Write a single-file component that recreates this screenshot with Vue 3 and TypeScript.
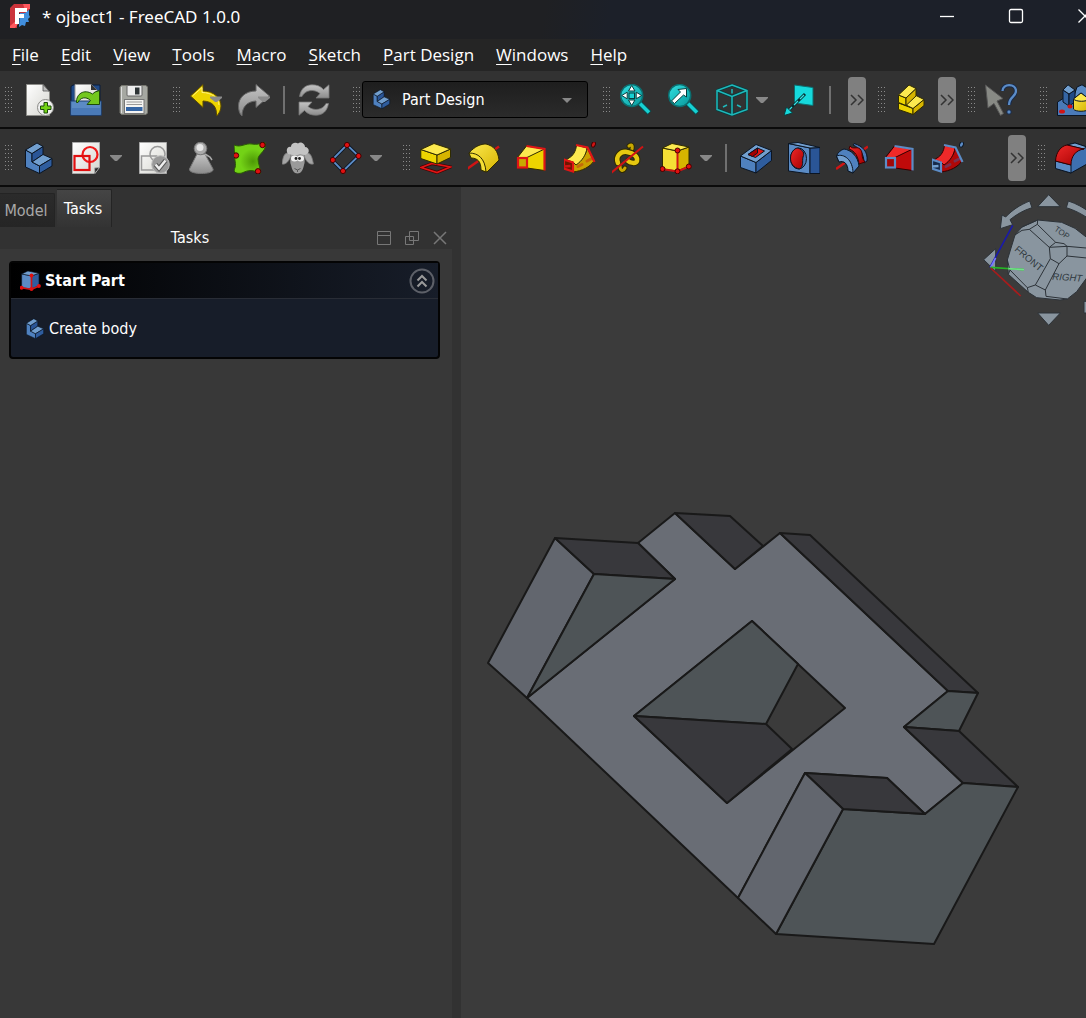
<script setup lang="ts">
import { ref } from 'vue'

type ToolItem = { kind: 'tool' | 'drop' | 'sep' | 'more'; icon?: string; label?: string }

const tool = (icon: string, label: string): ToolItem => ({ kind: 'tool', icon, label })
const drop = (label: string): ToolItem => ({ kind: 'drop', label })
const sep: ToolItem = { kind: 'sep' }
const more: ToolItem = { kind: 'more', label: 'More tools' }

const menus = ['File', 'Edit', 'View', 'Tools', 'Macro', 'Sketch', 'Part Design', 'Windows', 'Help']

const workbench = ref('Part Design')

const fileTools: ToolItem[][] = [
  [tool('new', 'New document'), tool('open', 'Open'), tool('save', 'Save')],
  [tool('undo', 'Undo'), tool('redo', 'Redo'), sep, tool('refresh', 'Refresh')],
]

const viewTools: ToolItem[][] = [
  [tool('fit', 'Fit all'), tool('fitsel', 'Fit selection'), tool('iso', 'Isometric view'), drop('Standard views'), tool('measure', 'Align to face'), sep, more],
  [tool('part', 'Create part'), more],
  [tool('help', "What's this?")],
  [tool('assembly', 'Assembly')],
]

const designTools: ToolItem[][] = [
  [tool('body', 'Create body'), tool('sketch', 'Create sketch'), drop('Sketch tools'), tool('validate', 'Validate sketch'), tool('pawn', 'Check geometry'), tool('binder', 'Shape binder'), tool('sheep', 'Clone'), tool('datum', 'Datum'), drop('Datum tools')],
  [tool('pad', 'Pad'), tool('revolve', 'Revolution'), tool('loft', 'Additive loft'), tool('pipe', 'Additive pipe'), tool('helix', 'Additive helix'), tool('prim', 'Additive primitive'), drop('Additive primitives'), sep, tool('pocket', 'Pocket'), tool('hole', 'Hole'), tool('groove', 'Groove'), tool('subloft', 'Subtractive loft'), tool('subpipe', 'Subtractive pipe'), more],
  [tool('fillet', 'Fillet')],
]

const activeTab = ref('Tasks')
const taskOpen = ref(true)

type Face = { tone: string; points: string }
const faces: Face[] = [
  { tone: 'side', points: '555,538 594,574 527,698 488,663' },
  { tone: 'dark', points: '555,538 638,543 675,579 594,574' },
  { tone: 'green', points: '594,574 675,579 527,698' },
  { tone: 'dark', points: '675,513 730,516 763,546 735,569' },
  { tone: 'dark', points: '780,533 810,535 978,693 948,691' },
  { tone: 'green', points: '948,691 978,693 959,731 904,727' },
  { tone: 'dark', points: '904,727 959,731 1018,787 963,783' },
  { tone: 'green', points: '963,783 1018,787 934,944 776,934 843,809 925,814' },
  { tone: 'dark', points: '805,773 887,778 925,814 843,809' },
  { tone: 'side', points: '805,773 843,809 776,934 738,898' },
  { tone: 'green', points: '752,621 798,664 766,724 634,716' },
  { tone: 'dark', points: '634,716 766,724 792,749 727,803' },
]
const bars = [
  { name: 'main', start: fileTools, combo: true, rest: viewTools },
  { name: 'design', start: designTools, combo: false, rest: [] as ToolItem[][] },
]
</script>

<template>
  <div class="app">
    <svg class="defs" aria-hidden="true">
      <defs>
        <linearGradient id="gPage" x1="0" y1="0" x2="1" y2="1"><stop offset="0" stop-color="#fff" /><stop offset="1" stop-color="#d5d5cf" /></linearGradient>
        <linearGradient id="gGrey" x1="0" y1="0" x2="0" y2="1"><stop offset="0" stop-color="#c4c4c4" /><stop offset="1" stop-color="#8c8c8c" /></linearGradient>
        <linearGradient id="gYel" x1="0" y1="0" x2="1" y2="1"><stop offset="0" stop-color="#fce94f" /><stop offset="1" stop-color="#d6b400" /></linearGradient>
        <linearGradient id="gBlue" x1="0" y1="0" x2="1" y2="1"><stop offset="0" stop-color="#729fcf" /><stop offset="1" stop-color="#3465a4" /></linearGradient>
        <linearGradient id="gRed" x1="0" y1="0" x2="1" y2="1"><stop offset="0" stop-color="#ef2929" /><stop offset="1" stop-color="#a40000" /></linearGradient>
        <radialGradient id="gGreen" cx="0.6" cy="0.6" r="0.4"><stop offset="0" stop-color="#4e9a06" /><stop offset="1" stop-color="#73d216" /></radialGradient>
        <linearGradient id="gTeal" x1="0" y1="0" x2="1" y2="1"><stop offset="0" stop-color="#34e0e2" /><stop offset="1" stop-color="#06989a" /></linearGradient>
      </defs>
      <symbol id="new" viewBox="0 0 32 32">
        <path d="M4.500 .5H21L27.500 8V31.500H4.500Z" fill="url(#gPage)" stroke="#8c8c88" />
        <path d="M21 .5V7H27Z" fill="#bbb" stroke="#555" stroke-width=".8" />
        <circle cx="23.500" cy="23.500" r="8" fill="#eee" stroke="#8a8a86" />
        <path d="M22 18.500h3.500v3.500H29v3.500h-3.500V29H22v-3.500h-3.500V22H22Z" fill="#73d216" stroke="#1c4a0b" />
      </symbol>
      <symbol id="open" viewBox="0 0 32 32">
        <path d="M1 31V2.500L3 1H30V31Z" fill="#204a87" stroke="#0b1d3a" />
        <path d="M5 20V.5H21.500L27 6V20Z" fill="url(#gPage)" stroke="#999" />
        <path d="M21 0V6H27Z" fill="#333" />
        <path d="M.7 17H31.300V31.300H.7Z" fill="#5b8bc4" stroke="#1d3d6c" />
        <path d="M1.500 24H30.500V30.500H1.500Z" fill="#4a7ab8" />
        <path d="M6.500 18.500C6 10 14 4.500 22.500 10L25 8 29.500 6.500V20.500H17L20.500 16.500C16 12 10 13.500 8 18.500Z" fill="#73c81e" stroke="#1c4a0b" />
      </symbol>
      <symbol id="save" viewBox="0 0 32 32">
        <path d="M3.500 1.500H28L29.500 3V29L28 30.500H3.500L2 29V3Z" fill="#a6a8a2" stroke="#77776f" />
        <path d="M3.500 3V29" stroke="#ddd" />
        <rect x="9" y="1.500" width="15" height="10.500" rx="1" fill="#eee" stroke="#666" />
        <rect x="17" y="3.500" width="4.500" height="7" fill="#2e3436" />
        <rect x="6.500" y="15.500" width="19.500" height="14" fill="#f4f4f2" stroke="#777" />
        <path d="M8.500 18H24M8.500 20.500H24" stroke="#999" />
        <rect x="8" y="23" width="16.500" height="4" fill="#3465a4" />
      </symbol>
      <symbol id="undo" viewBox="0 0 32 32">
        <path d="M.5 12L13 .5V7C24 7 31 14 31 22C31 26 29 30 26.500 32C27 23 23 17.500 13 17V23.500Z" fill="#edd400" stroke="#5b4a00" />
        <path d="M2.500 12L12 3.500V8.500C22 8.500 28.500 14 29 21" fill="none" stroke="#fff07a" />
        <path d="M20 12.500H32V14L27 18H25L20 14Z" fill="#8b8b8b" />
      </symbol>
      <symbol id="redo" viewBox="0 0 32 32">
        <path d="M31.500 12L18 .5V7C7 7 .5 14 .5 22C.5 26 1.500 30 4 32C4 23 9 17.500 18 17V23.500Z" fill="url(#gGrey)" stroke="#666" />
        <path d="M20 12.500H32V14L27 18H25L20 14Z" fill="#8b8b8b" />
      </symbol>
      <symbol id="refresh" viewBox="0 0 32 32">
        <path d="M1.500 12.500C3 4 8 .8 14 .8C18.500 .8 22.500 2 25.500 5.500L31 .8V14H18L22 9.500C16 4.500 7 6 4 12.500Z" fill="url(#gGrey)" stroke="#777" stroke-width=".8" />
        <path d="M30.500 19.500C29 28 24 31.200 18 31.200C13.500 31.200 9.500 30 6.500 26.500L1 31.200V18H14L10 22.500C16 27.500 25 26 28 19.500Z" fill="url(#gGrey)" stroke="#777" stroke-width=".8" />
      </symbol>
      <symbol id="fit" viewBox="0 0 32 32">
        <path d="M19.500 19L29.500 29" stroke="#0b4a4c" stroke-width="5.500" /><path d="M20 19.500L29 28.500" stroke="#16d0d2" stroke-width="3.500" />
        <circle cx="11.700" cy="11.500" r="11" fill="url(#gTeal)" stroke="#0b6e70" stroke-width="1.500" />
        <path d="M11.700 1.500L15 7H8.500ZM11.700 21.500L15 16H8.500ZM1.700 11.500L7.200 8.200V14.800ZM21.700 11.500L16.200 8.200V14.800Z" fill="#fff" stroke="#093d3e" />
        <rect x="9" y="9" width="5.500" height="5.500" fill="#16d0d2" stroke="#093d3e" />
      </symbol>
      <symbol id="fitsel" viewBox="0 0 32 32">
        <path d="M19.500 19L29.500 29" stroke="#0b4a4c" stroke-width="5.500" /><path d="M20 19.500L29 28.500" stroke="#16d0d2" stroke-width="3.500" />
        <circle cx="11.700" cy="11.500" r="11" fill="url(#gTeal)" stroke="#0b6e70" stroke-width="1.500" />
        <path d="M18.500 4.500V13L15.500 11L6.500 19.500L3.500 17L12.500 8L10 5.500Z" fill="#fff" stroke="#093d3e" />
      </symbol>
      <symbol id="iso" viewBox="0 0 32 32">
        <path d="M16 1L31 6.500V25.500L16 31L1 25.500V6.500ZM1 6.500L16 12.500L31 6.500M16 12.500V31" fill="none" stroke="#0a3c3e" stroke-width="3" />
        <path d="M16 1L31 6.500V25.500L16 31L1 25.500V6.500ZM1 6.500L16 12.500L31 6.500M16 12.500V31M16 5V9.500M7 23L11 21M21 21L25 23" fill="none" stroke="#1fb9bb" stroke-width="1.500" />
      </symbol>
      <symbol id="measure" viewBox="0 0 32 32">
        <path d="M10.500 1L29 3.500V21.500L10.500 19Z" fill="#16d9dc" stroke="#0b6e70" />
        <path d="M21 10L5 26" stroke="#0a2c2e" stroke-width="3" /><path d="M20 11L16 15M14 17L10 21M8 23L5 26" stroke="#35e4e6" stroke-width="1.200" />
        <path d="M0 31.500L2.500 23L8.500 29Z" fill="#16d9dc" stroke="#0a3c3e" />
      </symbol>
      <symbol id="part" viewBox="0 0 32 32">
        <g stroke="#302b00" stroke-linejoin="round">
          <path d="M3.500 19L18 24.500V30.500L3.500 25.500Z" fill="#edd400" /><path d="M18 24.500L29 15.500V21.500L18 30.500Z" fill="#d6b400" /><path d="M18 24.500L29 15.500L21 11.500L10 20.500Z" fill="#fce94f" />
          <path d="M3.500 11L11 14V21.500L3.500 18.500Z" fill="#edd400" /><path d="M11 14L21 4.500V12L11 21.500Z" fill="#d6b400" /><path d="M3.500 11L14 1L21 4.500L11 14Z" fill="#fce94f" />
        </g>
      </symbol>
      <symbol id="help" viewBox="0 0 32 32">
        <path d="M.5 1L18 14.500L12 17L18.500 29.500L15.500 31.500L9 19.500L3 24Z" fill="#888a85" stroke="#555" />
        <path d="M17.500 7C17.500 -1 31 -.5 31 7C31 13 24 12.500 24 21" fill="none" stroke="#16294a" stroke-width="4" /><path d="M17.500 7C17.500 -1 31 -.5 31 7C31 13 24 12.500 24 21" fill="none" stroke="#5c8cc6" stroke-width="2.300" />
        <circle cx="24" cy="28" r="2.200" fill="#5c8cc6" stroke="#16294a" />
      </symbol>
      <symbol id="assembly" viewBox="0 0 32 32">
        <g stroke="#0b1523">
          <path d="M.5 18L7 14L32 8V31.500H.5Z" fill="#4a7ab8" /><path d="M17 12L20 3L25 .8L32 5V16H17Z" fill="#5b8bc4" />
          <path d="M6 6L12 10V22L6 18Z" fill="#3465a4" /><path d="M12 10L18 6V18L12 22Z" fill="#204a87" /><path d="M6 6L11 .8L18 6L12 10Z" fill="#729fcf" />
          <path d="M16.500 15V25C18 28 30 28 32 25V15L24 9Z" fill="url(#gYel)" /><path d="M16.500 15L24 9L32 15C30 18 19 18 16.500 15Z" fill="#fce94f" />
        </g>
        <ellipse cx="5" cy="27.500" rx="3" ry="2" fill="#d01414" /><ellipse cx="13" cy="22.500" rx="2.500" ry="2" fill="#d01414" />
      </symbol>
      <symbol id="body" viewBox="0 0 32 32">
        <g stroke="#0b1523" stroke-linejoin="round">
          <path d="M3.500 8L10 11.500V20L17.500 24V31.500L3.500 25Z" fill="#4f81bf" /><path d="M10 11.500L21 4.500V12.500L10 20Z" fill="#2a5596" />
          <path d="M3.500 8L15 1L21 4.500L10 11.500Z" fill="#729fcf" /><path d="M10 20L21 12.500L30 16.500L17.500 24Z" fill="#729fcf" /><path d="M17.500 24L30 16.500V24L17.500 31.500Z" fill="#2f5d9e" />
        </g>
      </symbol>
      <symbol id="sketch" viewBox="0 0 32 32">
        <path d="M2.500 .5H29.500V25L24 31.500H2.500Z" fill="url(#gPage)" stroke="#aaa" /><path d="M29.500 25.500L25 31.500L24.500 26Z" fill="#222" stroke="#aaa" />
        <circle cx="20" cy="12.500" r="7.500" fill="none" stroke="#ef1a1a" stroke-width="2.200" /><rect x="4.500" y="14" width="15" height="14" fill="none" stroke="#e01010" stroke-width="2.200" />
      </symbol>
      <symbol id="validate" viewBox="0 0 32 32">
        <path d="M1.500 .5H28.500V31.500H1.500Z" fill="url(#gPage)" stroke="#aaa" />
        <circle cx="19.500" cy="12" r="7.500" fill="none" stroke="#999" stroke-width="1.500" /><rect x="3.500" y="14" width="15" height="14" fill="none" stroke="#999" stroke-width="1.500" />
        <circle cx="22.500" cy="22.500" r="8.800" fill="#999" stroke="#bbb" /><path d="M17.500 22.500L21 26.500L27.500 18.500" fill="none" stroke="#555" stroke-width="4.500" /><path d="M17.500 22.500L21 26.500L27.500 18.500" fill="none" stroke="#eee" stroke-width="2.500" />
      </symbol>
      <symbol id="pawn" viewBox="0 0 32 32">
        <path d="M11 12L3.500 27C2 33 29 33 27 27L19 12Z" fill="url(#gGrey)" stroke="#777" /><path d="M19 12L24 15L26 18" stroke="#aaa" stroke-width="1.500" fill="none" />
        <circle cx="14.500" cy="6.500" r="6.300" fill="#aaa" stroke="#777" /><circle cx="14" cy="5.500" r="3.500" fill="#e5e5e5" />
      </symbol>
      <symbol id="binder" viewBox="0 0 32 32">
        <path d="M0 3C7 6 11 1 18 2C23 3 26 1.500 31 .5C34 8 24 12 24 17C24 22 27 26 26 32C20 27 14 28 8 31C4 32 -1 31 .5 27C3 22 0 18 .5 12Z" fill="url(#gGreen)" stroke="#2a5c04" />
        <g fill="#e01010" stroke="#400"><circle cx="28.500" cy="3" r="2.700" /><circle cx="2" cy="13.500" r="2.700" /><circle cx="24" cy="29.300" r="2.700" /></g>
      </symbol>
      <symbol id="sheep" viewBox="0 0 32 32">
        <path d="M8 11C2 10 1 15 0 22C4 23 7 19 9 14ZM23 11C29 10 30 15 31.500 22C27 23 24 19 22 14Z" fill="#a5a5a5" stroke="#777" stroke-width=".8" />
        <path d="M8 10C10 15 7 18 9 23C10 28 12 31.500 15.500 31.500S21 28 22 23C24 18 21 15 23 10Z" fill="#9a9a9a" />
        <path d="M6 12C3 8 6 4 9 5C9 1 14 0 16 1.500C19 -1 23 2 23 5C27 5 28 10 25 12C22 14 20 12 18 12C14 14 10 13 6 12Z" fill="#c4c4c4" />
        <ellipse cx="12.500" cy="16.500" rx="3.500" ry="3" fill="#eee" /><ellipse cx="18.500" cy="16.500" rx="3.500" ry="3" fill="#eee" />
        <circle cx="14" cy="16.500" r="1.400" fill="#222" /><circle cx="17.500" cy="16.500" r="1.400" fill="#222" /><path d="M12.500 26.500L15.500 28L18.500 26.500M15.500 28V30" stroke="#555" fill="none" />
      </symbol>
      <symbol id="datum" viewBox="0 0 32 32">
        <path d="M17 2.800L28.500 14L13 29.200L2 18Z" fill="none" stroke="#0b1523" stroke-width="3.500" /><path d="M17 2.800L28.500 14L13 29.200L2 18Z" fill="none" stroke="#5c8cc6" stroke-width="1.800" />
        <g fill="#e01010" stroke="#400"><circle cx="17" cy="3" r="2.600" /><circle cx="28.500" cy="14" r="2.600" /><circle cx="13" cy="29" r="2.600" /><circle cx="2.800" cy="18" r="2.600" /></g>
      </symbol>
      <symbol id="pad" viewBox="0 0 32 32">
        <path d="M1 25.500L12 21.500L30.500 25L17 30.500Z" fill="none" stroke="#400" stroke-width="3" /><path d="M1 25.500L12 21.500L30.500 25L17 30.500Z" fill="none" stroke="#e01515" stroke-width="1.700" />
        <g stroke="#302b00"><path d="M.8 7.500L17 13V22L.8 16.500Z" fill="#edd400" /><path d="M17 13L30.500 7V15.500L17 22Z" fill="#d6b400" /><path d="M.8 7.500L14 1.500L30.500 7L17 13Z" fill="#fce94f" /></g>
      </symbol>
      <symbol id="revolve" viewBox="0 0 32 32">
        <path d="M-1 27L31 4.500" stroke="#d01414" stroke-width="2.500" />
        <path d="M1 11C7 4 13 2 18 2C26 4 30 9 31 18L19 30L13 28C14 20 10 16 3 16Z" fill="url(#gYel)" stroke="#302b00" />
        <path d="M1 11C10 11 17 16 18 30L13 28C13 20 10 16 3 16Z" fill="#f5df35" stroke="#302b00" />
      </symbol>
      <symbol id="loft" viewBox="0 0 32 32">
        <path d="M1.500 15.500L10.500 4L28.500 7V28.500L11 26H1.500Z" fill="#edd400" stroke="#302b00" /><path d="M1.500 15.500L10.500 4L28.500 7L11 15.500Z" fill="#fce94f" stroke="#302b00" />
        <path d="M10.500 4L28.500 7V28.500" fill="none" stroke="#e01515" stroke-width="2.200" /><rect x="2" y="16" width="9" height="9.500" fill="#c9a800" stroke="#e01515" stroke-width="2.200" />
      </symbol>
      <symbol id="pipe" viewBox="0 0 32 32">
        <path d="M13 21C18 18 22 12 23 6L30 19C26 25 18 29 9 30V21Z" fill="#c9a000" stroke="#302b00" />
        <path d="M5 16C9 14 12 9 12.500 3L23 6C22 13 18 19 12 23L9 20L2 18Z" fill="#fce94f" stroke="#302b00" />
        <path d="M14 24.500L18 22.500M23 19L27 17" stroke="#c4690a" stroke-width="3" stroke-linecap="round" />
        <path d="M12 3L23.500 5.500L30.500 20" fill="none" stroke="#e01515" stroke-width="2.200" /><path d="M0 17.500L9 20.500V29.500L0 26.500Z" fill="#6e1500" stroke="#e01515" stroke-width="2.200" />
        <path d="M0 24.500L6.500 24" stroke="#d01414" stroke-width="2.500" /><ellipse cx="29.500" cy="2.500" rx="1.800" ry="2.800" transform="rotate(20 29.500 2.500)" fill="#d01414" stroke="#400" />
      </symbol>
      <symbol id="helix" viewBox="0 0 32 32">
        <g fill="none" stroke-linecap="round">
          <path d="M17 4C21 1 21 6 19 9" stroke="#302b00" stroke-width="5" /><path d="M17 4C21 1 21 6 19 9" stroke="#c9a800" stroke-width="3" />
          <path d="M8 24C8 29 11 30 13 26" stroke="#302b00" stroke-width="5" /><path d="M8 24C8 29 11 30 13 26" stroke="#c9a800" stroke-width="3" />
          <path d="M6 21C3 14 9 9 15 10C22 11 26 15 25 19C24 22 18 21 16 19" stroke="#302b00" stroke-width="6.500" /><path d="M6 21C3 14 9 9 15 10C22 11 26 15 25 19C24 22 18 21 16 19" stroke="#e6c810" stroke-width="4.500" />
        </g>
        <path d="M-1 31L31 4.500" stroke="#d01414" stroke-width="2" />
      </symbol>
      <symbol id="prim" viewBox="0 0 32 32">
        <g stroke="#302b00"><path d="M2.500 6L17.500 9V29L2.500 27Z" fill="#f5df35" /><path d="M17.500 9L29 5V24L17.500 29Z" fill="#d6b400" /><path d="M2.500 6L12 1.500L29 5L17.500 9Z" fill="#fce94f" /></g>
        <path d="M17.500 8V29.500M2 27L17.500 29.500L29 24.500" fill="none" stroke="#d01414" stroke-width="2" />
        <g fill="#e01010" stroke="#400"><circle cx="17.500" cy="8.500" r="2.500" /><circle cx="2.500" cy="27" r="2.500" /><circle cx="17.500" cy="29.300" r="2.500" /><circle cx="28.800" cy="24.500" r="2.500" /></g>
      </symbol>
      <symbol id="primBlue" viewBox="0 0 32 32">
        <g stroke="#0b1523"><path d="M2.500 6L17.500 9V29L2.500 27Z" fill="#5b8bc4" /><path d="M17.500 9L29 5V24L17.500 29Z" fill="#2f5d9e" /><path d="M2.500 6L12 1.500L29 5L17.500 9Z" fill="#729fcf" /></g>
        <path d="M17.500 8V29.500M2 27L17.500 29.500L29 24.500" fill="none" stroke="#d01414" stroke-width="2.500" />
        <g fill="#e01010"><circle cx="17.500" cy="8.500" r="3" /><circle cx="2.500" cy="27" r="3" /><circle cx="17.500" cy="29" r="3" /><circle cx="28.800" cy="24.500" r="3" /></g>
      </symbol>
      <symbol id="pocket" viewBox="0 0 32 32">
        <g stroke="#0b1523"><path d="M.5 14L16 20.500V31L.5 25.500Z" fill="#4f81bf" /><path d="M16 20.500L31.500 8.500V18.500L16 31Z" fill="#2f5d9e" /><path d="M.5 14L16 2.500L31.500 8.500L16 20.500Z" fill="#729fcf" /><path d="M8 12.500L17.500 6L24.500 9L15.500 15.500Z" fill="#e01515" /><path d="M8 12.500L17.500 6V11L12.500 14.500Z" fill="#a40000" /></g>
      </symbol>
      <symbol id="hole" viewBox="0 0 32 32">
        <g stroke="#0b1523"><path d="M.5 1.500L22 6V32L.5 29Z" fill="#5b8bc4" /><path d="M22 6L32 5.500V31.500H22Z" fill="#2a5596" /><path d="M.5 1.500L10 .5L32 5.500L22 6Z" fill="#729fcf" /><ellipse cx="10.500" cy="16.500" rx="8" ry="10.500" fill="#4a7ab8" /><path d="M10 6C15 8 17 11 15 15C14 20 16 23 12 27C5 26 2.500 21 2.500 16C2.500 11 6 6 10 6Z" fill="url(#gRed)" /></g>
      </symbol>
      <symbol id="groove" viewBox="0 0 32 32">
        <path d="M0 27L32 4.500" stroke="#d01414" stroke-width="2.500" />
        <path d="M18 1.500C27 4 32 10 31 19L28 21C28 12 24 6 17 3Z" fill="#4a7ab8" stroke="#0b1523" />
        <path d="M14 4C17 8 21 4 24 7C28 11 24 14 29 20L23 22C22 14 19 9 13 7Z" fill="url(#gRed)" stroke="#400" />
        <g stroke="#0b1523"><path d="M.5 14C2 10 5 8 8 7C15 8 22 14 23 24L17 31L12 29C12 22 8 18 3 20Z" fill="#4f81bf" /><path d="M.5 14C8 11 17 18 17 31L12 29C12 22 8 18 3 20Z" fill="#729fcf" /></g>
      </symbol>
      <symbol id="subloft" viewBox="0 0 32 32">
        <path d="M1.500 15.500L10.500 4L28.500 7V28.500L11 26H1.500Z" fill="#c00a0a" stroke="#300" /><path d="M1.500 15.500L10.500 4L28.500 7L11 15.500Z" fill="#ef2929" stroke="#300" />
        <path d="M10.500 4L28.500 7V28.500" fill="none" stroke="#5c8cc6" stroke-width="2.200" /><rect x="2" y="16" width="9" height="9.500" fill="#a00808" stroke="#5c8cc6" stroke-width="2.200" />
      </symbol>
      <symbol id="subpipe" viewBox="0 0 32 32">
        <path d="M13 21C18 18 22 12 23 6L30 19C26 25 18 29 9 30V21Z" fill="#b00808" stroke="#300" />
        <path d="M5 16C9 14 12 9 12.500 3L23 6C22 13 18 19 12 23L9 20L2 18Z" fill="#ef2929" stroke="#300" />
        <path d="M14 24.500L18 22.500M23 19L27 17" stroke="#7a3050" stroke-width="3" stroke-linecap="round" />
        <path d="M12 3L23.500 5.500L30.500 20" fill="none" stroke="#5c8cc6" stroke-width="2.200" /><path d="M0 17.500L9 20.500V29.500L0 26.500Z" fill="#16294a" stroke="#5c8cc6" stroke-width="2.200" />
        <path d="M0 24.500L6.500 24" stroke="#729fcf" stroke-width="2.500" /><ellipse cx="29.500" cy="2.500" rx="1.800" ry="2.800" transform="rotate(20 29.500 2.500)" fill="#5c8cc6" stroke="#0b1523" />
      </symbol>
      <symbol id="fillet" viewBox="0 0 32 32">
        <g stroke="#0b1523"><path d="M12 3L20 1L32 5V22L16 31L.5 26V18Z" fill="#3e70b0" /><path d="M12 3L20 1L32 5L28 7Z" fill="#729fcf" /><path d="M.5 19L16 23V31L.5 26.500Z" fill="#5b8bc4" /></g>
        <path d="M.5 19C1 10 6 4 12 3L29 7C21 8 16 14 16 23Z" fill="url(#gRed)" stroke="#300" />
      </symbol>
    </svg>

    <header class="titlebar">
      <svg class="logo" viewBox="0 0 20 24" aria-hidden="true">
        <path d="M10 6L19 4V11L20 13L18 15L19 18L16 18L15 22L12 21L9 23Z" fill="#418fde" />
        <path d="M4 0H20V5L15 9H7V24H0V4Z" fill="#cb333b" /><path d="M0 22L8 15V20L5 24H0ZM13 0H20V5L15 6Z" fill="#ff585d" />
        <path d="M5 4H17V8H9V10H14V14H9V20H5Z" fill="#fff" />
      </svg>
      <span class="title">* ojbect1 - FreeCAD 1.0.0</span>
      <div class="controls">
        <button aria-label="Minimize"><svg viewBox="0 0 16 16"><path d="M1 8.500H15" /></svg></button>
        <button aria-label="Maximize"><svg viewBox="0 0 16 16"><rect x="1.500" y="1.500" width="13" height="13" rx="1.500" /></svg></button>
        <button aria-label="Close"><svg viewBox="0 0 16 16"><path d="M1.500 1.500L14.500 14.500M14.500 1.500L1.500 14.500" /></svg></button>
      </div>
    </header>

    <nav class="menubar">
      <button v-for="m in menus" :key="m"><u>{{ m[0] }}</u>{{ m.slice(1) }}</button>
    </nav>

    <div v-for="bar in bars" :key="bar.name" class="toolbar" :class="bar.name">
      <template v-for="(groups, side) in [bar.start, bar.rest]" :key="side">
        <div v-if="side === 1 && bar.combo" class="group">
          <span class="grip"></span>
          <div class="combo">
            <svg class="comboicon" aria-hidden="true"><use href="#body" /></svg>
            <select v-model="workbench" aria-label="Workbench"><option>Part Design</option></select>
            <svg class="caret" viewBox="0 0 12 6" aria-hidden="true"><path d="M1 0H11L6 5Z" /></svg>
          </div>
        </div>
        <div v-for="(g, gi) in groups" :key="gi" class="group">
          <span class="grip"></span>
          <template v-for="(t, ti) in g" :key="ti">
            <button v-if="t.kind === 'tool'" class="tool" :aria-label="t.label"><svg><use :href="'#' + t.icon" /></svg></button>
            <button v-else-if="t.kind === 'drop'" class="drop" :aria-label="t.label"><svg viewBox="0 0 12 6"><path d="M0 0H12V1L7 6H5L0 1Z" /></svg></button>
            <span v-else-if="t.kind === 'sep'" class="sep"></span>
            <button v-else class="more" :aria-label="t.label"><svg viewBox="0 0 14 12"><path d="M1 1L6 6L1 11M8 1L13 6L8 11" /></svg></button>
          </template>
        </div>
      </template>
    </div>

    <main class="work">
      <aside class="panel">
        <div class="tabs" role="tablist">
          <button v-for="t in ['Model', 'Tasks']" :key="t" role="tab" :aria-selected="t === activeTab" :class="{ active: t === activeTab }" @click="activeTab = t">{{ t }}</button>
        </div>
        <div class="dockhead">
          <span>Tasks</span>
          <button aria-label="Collapse"><svg viewBox="0 0 14 14"><path d="M.5 .5H13.500V13.500H.5ZM.5 4.500H13.500" /></svg></button>
          <button aria-label="Float"><svg viewBox="0 0 14 14"><path d="M4.500 .5H13.500V9.500H4.500ZM.5 5.500H8.500V13.500H.5Z" /></svg></button>
          <button aria-label="Close panel"><svg viewBox="0 0 14 14"><path d="M1 1L13 13M13 1L1 13" stroke-width="1.500" /></svg></button>
        </div>
        <div class="dockbody">
          <section class="task">
            <h2>
              <svg aria-hidden="true"><use href="#primBlue" /></svg>
              <span>Start Part</span>
              <button aria-label="Toggle Start Part" :aria-expanded="taskOpen" @click="taskOpen = !taskOpen">
                <svg viewBox="0 0 26 26"><circle cx="13" cy="13" r="11.500" /><path d="M8.500 12.500L13 8L17.500 12.500M8.500 18.500L13 14L17.500 18.500" /></svg>
              </button>
            </h2>
            <div v-if="taskOpen" class="taskbody">
              <a href="#create-body"><svg aria-hidden="true"><use href="#body" /></svg>Create body</a>
            </div>
          </section>
        </div>
      </aside>

      <section class="view">
        <svg class="scene" viewBox="461 187 625 831" preserveAspectRatio="xMinYMin meet" role="img" aria-label="ojbect1">
          <path class="front" fill-rule="evenodd" d="M527 698L675 579L638 543L675 513L735 569L780 533L948 691L904 727L963 783L925 814L887 778L805 773L738 898ZM752 621L845 708L727 803L634 716Z" />
          <polygon v-for="f in faces" :key="f.points" :class="f.tone" :points="f.points" />
        </svg>
        <svg class="navcube" viewBox="60 15 318 420" role="img" aria-label="Navigation cube">
          <g class="arrows">
            <path d="M266 29L301 65H233ZM233 384H301L266 421ZM71 224L107 191V259Z" />
            <path d="M209 48L216 68C190 76 170 88 150 104L158 119L121 131L126 90L137 96C158 74 180 60 209 48Z" />
            <path d="M325 48C350 56 370 68 390 82V104C368 88 345 76 319 68ZM372 349H390V384H372Z" />
          </g>
          <path d="M90 247L158 121" stroke="#1a1aa8" stroke-width="5" /><path d="M92 247L107 219" stroke="#7878ff" stroke-width="5" />
          <path class="solid" d="M233 105L305 112L345 130L390 165V265L350 320L322 342L300 345L230 338L205 322L145 268L142 225L165 150L186 126Z" />
          <path class="edges" d="M165 150L186 136L208 133L268 187L321 184L390 190M186 126L233 105L232 118L208 133M232 118L287 172L312 176L321 184M287 172L268 187L271 221L297 236L321 213V184M321 213L390 220M271 221L226 300L202 308L145 250M226 300L256 315L258 334L322 342M297 236L256 315M202 308L205 322M145 268L150 255L142 225" />
          <path d="M92 247L192 254" stroke="#25b625" stroke-width="5" /><path d="M145 251L192 254" stroke="#72e08a" stroke-width="5" /><path d="M92 249L182 333" stroke="#a81c1c" stroke-width="5" />
          <text transform="translate(162 196) rotate(40)" font-size="29">FRONT</text>
          <text transform="translate(276 284) rotate(4)" font-size="29" font-style="italic">RIGHT</text>
          <text transform="translate(281 136) rotate(34)" font-size="24">TOP</text>
        </svg>
      </section>
    </main>
  </div>
</template>

<style>
body { margin: 0; background: #323232; }
</style>

<style scoped>
.app { min-height: 100vh; display: flex; flex-direction: column; overflow: hidden; background: #323232; color: #fff; font-family: "DejaVu Sans Condensed", "Noto Sans", sans-serif; font-size: 16px; }
.app * { box-sizing: border-box; }
.defs { position: absolute; width: 0; height: 0; }
button { padding: 0; border: 0; background: none; color: inherit; font: inherit; }
svg { display: block; }

.titlebar { display: flex; align-items: center; height: 39px; padding-left: 10px; overflow: hidden; background: linear-gradient(100deg, #1f2023 0 50%, #1c2029 56%); font-family: "Noto Sans", "Open Sans", sans-serif; font-size: 17px; }
.logo { width: 20px; height: 24px; margin-bottom: 7px; }
.title { margin: 0 auto 6px 12px; line-height: 22px; white-space: nowrap; }
.controls { display: flex; margin-right: -33px; margin-bottom: 7px; }
.controls button { width: 69px; height: 32px; display: flex; align-items: center; justify-content: center; }
.controls svg { width: 16px; height: 16px; fill: none; stroke: #fff; stroke-width: 1.3; }

.menubar { display: flex; height: 32px; padding-left: 1px; background: #252525; font-family: "Open Sans", "Noto Sans", sans-serif; font-size: 17px; }
.menubar button { padding: 0 11px; line-height: 32px; white-space: nowrap; }
.menubar u { text-decoration-thickness: 1px; text-underline-offset: 3px; }

.toolbar { --gap: 10px; display: flex; height: 58px; padding-top: 1px; border-bottom: 2px solid #0b0b0b; background: #323232; overflow: hidden; }
.toolbar.design { --gap: 8px; }
.group { display: flex; align-items: center; flex: none; }
.group + .group { margin-left: var(--gap); }
.group:has(.more) + .group { margin-left: 7px; }
.grip { width: 7px; height: 25px; margin: 0 2px 0 5px; background: repeating-linear-gradient(90deg, #8a8a8a 0 1px, transparent 1px 3px); mask-image: repeating-linear-gradient(#000 0 1px, transparent 1px 4px); }
.tool { width: 48px; height: 48px; display: flex; align-items: center; justify-content: center; }
.tool svg { width: 32px; height: 32px; overflow: visible; }
.drop { width: 20px; height: 48px; }
.drop svg { width: 12px; height: 6px; fill: #888; }
.sep { width: 2px; height: 28px; margin: 0 5px; background: #707070; }
.more { width: 18px; height: 46px; margin-left: 3px; border-radius: 4px; background: #808080; display: flex; align-items: center; justify-content: center; }
.sep + .more { margin-left: 12px; }
.design .more { margin-left: 36px; }
.more svg { width: 14px; height: 12px; fill: none; stroke: #333; stroke-width: 1.5; }
.combo { position: relative; width: 226px; height: 37px; }
.combo select { width: 100%; height: 100%; padding: 0 30px 0 39px; border: 1px solid #000; border-radius: 3px; appearance: none; background: linear-gradient(#1e1e1e, #2b2b2b); color: #fff; font: inherit; }
.comboicon { position: absolute; left: 9px; top: 8px; width: 20px; height: 20px; pointer-events: none; }
.caret { position: absolute; right: 15px; top: 17px; width: 12px; height: 6px; fill: #888; pointer-events: none; }

.work { flex: 1; display: flex; }
.panel { flex: 0 0 452px; display: flex; flex-direction: column; }
.tabs { display: flex; align-items: flex-end; gap: 2px; height: 40px; }
.tabs button { width: 55px; height: 34px; padding-right: 2px; border: 1px solid #242424; border-left: 0; border-bottom: 0; border-radius: 0 2px 0 0; background: linear-gradient(#2b2b2b, #252525); color: #a8a8a8; }
.tabs button.active { height: 38px; background: linear-gradient(#454545, #333); color: #fff; }
.dockhead { display: flex; align-items: center; gap: 14px; height: 22px; padding: 0 5px 0 17px; }
.dockhead span { flex: 1; text-align: center; line-height: 22px; }
.dockhead svg { width: 14px; height: 14px; fill: none; stroke: #777; }
.dockbody { flex: 1; padding: 12px 12px 0 9px; background: #383838; }
.task { border: 2px solid #040404; border-radius: 4px; background: #171d29; }
.task h2 { display: flex; align-items: center; height: 36px; margin: 0; padding: 0 3px 0 9px; border-bottom: 1px solid #292d36; background: linear-gradient(90deg, #000, #171d29); font-size: 16px; font-weight: 700; }
.task h2 span { flex: 1; padding-left: 4px; }
.task h2 > svg { width: 21px; height: 21px; }
.task h2 button svg { width: 26px; height: 26px; fill: none; stroke: #5d6068; stroke-width: 2; }
.task h2 button path { stroke: #9a9a9a; }
.taskbody { height: 58px; padding-left: 13px; display: flex; align-items: center; }
.taskbody a { display: flex; align-items: center; gap: 4px; color: #fff; text-decoration: none; }
.taskbody svg { width: 21px; height: 21px; }

.view { position: relative; flex: 1; min-width: 0; margin-left: 9px; background: #3b3b3b; }
.scene { width: 100%; height: auto; stroke: #191919; stroke-width: 2; stroke-linejoin: round; }
.front { fill: #696d75; }
.side { fill: #62666e; }
.dark { fill: #38383c; }
.green { fill: #4e5457; }
.navcube { position: absolute; right: 0; top: 3px; width: 106px; height: 140px; }
.arrows, .solid { fill: #89959f; stroke: #2c3238; stroke-width: 3; stroke-linejoin: round; }
.edges { fill: none; stroke: #2c3238; stroke-width: 3; }
.navcube text { fill: #303940; font-family: "Liberation Sans", sans-serif; }
</style>
